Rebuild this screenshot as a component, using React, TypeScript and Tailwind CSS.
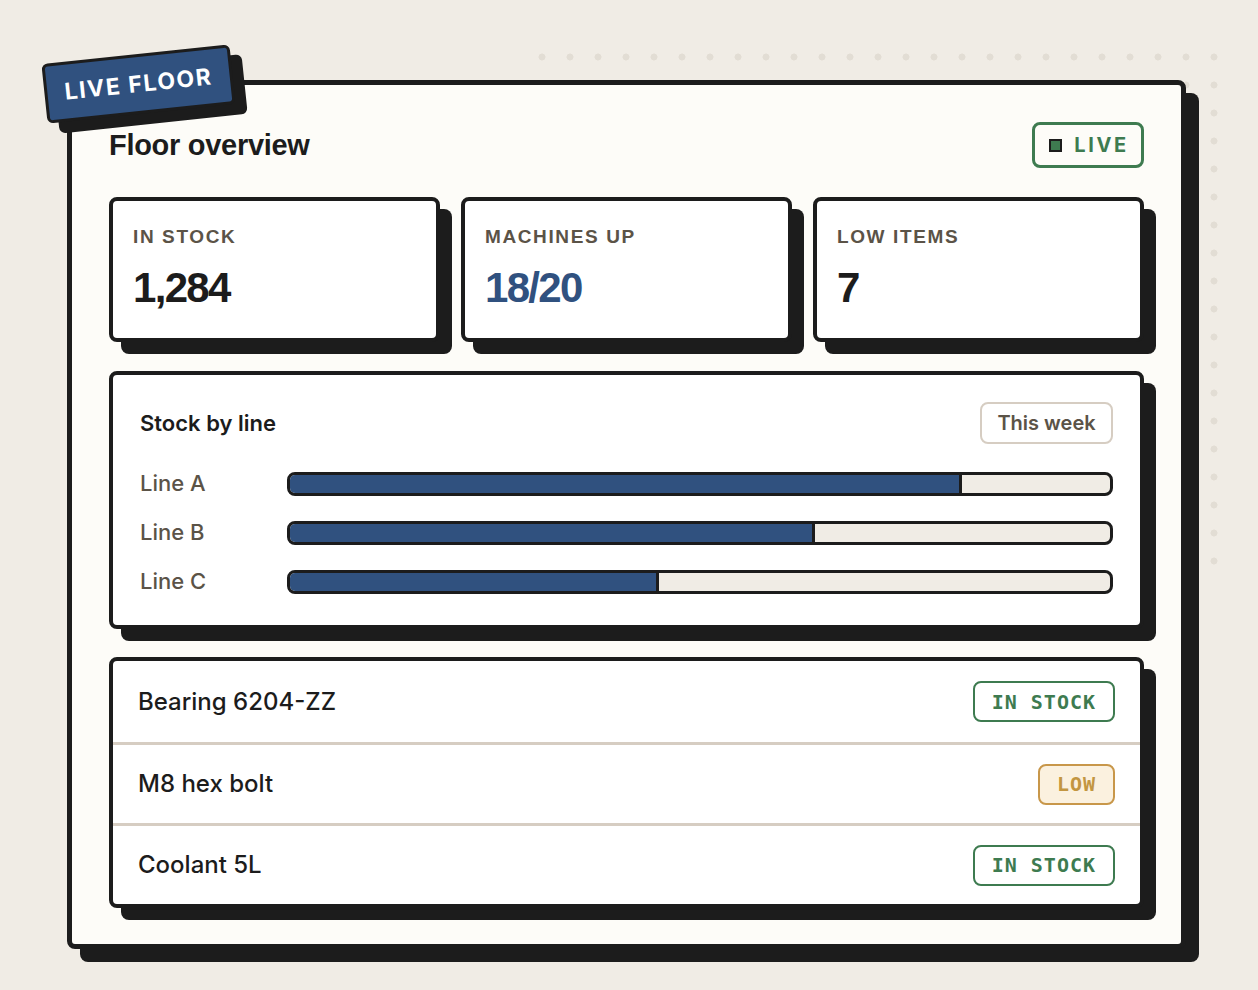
import React from 'react';

const stats = [
  { label: 'IN STOCK', value: '1,284', tone: 'text-[#1c1c1c]' },
  { label: 'MACHINES UP', value: '18/20', tone: 'text-[#30517f]' },
  { label: 'LOW ITEMS', value: '7', tone: 'text-[#1c1c1c]' },
];

const lines = [
  { name: 'Line A', pct: 82 },
  { name: 'Line B', pct: 64 },
  { name: 'Line C', pct: 45 },
];

const parts = [
  { name: 'Bearing 6204-ZZ', status: 'IN STOCK' },
  { name: 'M8 hex bolt', status: 'LOW' },
  { name: 'Coolant 5L', status: 'IN STOCK' },
];

const sans = "font-['Inter','Liberation_Sans',sans-serif]";
const arial = "font-['Liberation_Sans','Inter',sans-serif]";
const mono = "font-['DejaVu_Sans_Mono','Liberation_Mono',monospace]";

const StatusBadge: React.FC<{ status: string }> = ({ status }) => {
  const low = status === 'LOW';
  return (
    <span
      className={`${mono} h-[41px] px-[17px] flex items-center rounded-lg border-2 text-[20px] font-bold tracking-[1px] ${
        low
          ? 'border-[#c8974a] bg-[#fbf1df] text-[#c39641]'
          : 'border-[#3e7b50] bg-white text-[#3e7b50]'
      }`}
    >
      {status}
    </span>
  );
};

export default function App() {
  return (
    <div className={`${sans} relative min-h-[990px] bg-[#f0ece5] pl-[67px] pt-[80px] text-[#1c1c1c]`}>
      {/* dotted backdrop */}
      <div className="absolute left-[528px] top-[43px] w-[700px] h-[532px] bg-[radial-gradient(circle,#e2ddd4_3.2px,transparent_3.8px)] bg-[length:28px_28px]" />

      <div className="relative z-10 w-[1119px] rounded-lg border-[5px] border-[#1c1c1c] bg-[#fdfcf8] px-[37px] pt-[37px] pb-[36px] shadow-[13px_13px_0_#1c1c1c]">
        {/* tag */}
        <div className="absolute -left-[28px] -top-[31px] -rotate-[6deg] w-[189px] h-[60px] rounded-md border-[3px] border-[#1c1c1c] bg-[#30517f] shadow-[11px_11px_0_#1c1c1c] flex items-center justify-center">
          <span className="text-white text-[23px] font-bold tracking-[0.07em]">LIVE FLOOR</span>
        </div>

        <div className="flex items-center justify-between h-[46px]">
          <h1 className={`${arial} text-[29px] font-bold tracking-[-0.01em] pt-[1px]`}>Floor overview</h1>
          <div className="h-[46px] w-[112px] rounded-lg border-[3px] border-[#3e7b50] flex items-center justify-center gap-[12px] pl-[2px]">
            <span className="w-[13px] h-[13px] bg-[#3e7b50] border-2 border-[#1c1c1c]" />
            <span className="text-[#3e7b50] text-[20px] font-bold tracking-[0.13em]">LIVE</span>
          </div>
        </div>

        <div className="mt-[29px] grid grid-cols-3 gap-[21px]">
          {stats.map(s => (
            <div
              key={s.label}
              className="h-[145px] rounded-lg border-4 border-[#1c1c1c] bg-white shadow-[12px_12px_0_#1c1c1c] px-[20px] pt-[25px]"
            >
              <div className={`${arial} text-[19px] leading-[22px] font-bold tracking-[0.085em] text-[#5b5347]`}>{s.label}</div>
              <div className={`${arial} mt-[19px] text-[42px] leading-none font-bold tracking-[-0.04em] ${s.tone}`}>{s.value}</div>
            </div>
          ))}
        </div>

        <div className="mt-[29px] h-[258px] rounded-lg border-4 border-[#1c1c1c] bg-white shadow-[12px_12px_0_#1c1c1c] px-[27px] pt-[27px]">
          <div className="flex items-center justify-between h-[42px]">
            <h2 className="text-[22px] font-semibold">Stock by line</h2>
            <button className="h-[42px] w-[133px] rounded-lg border-2 border-[#d6cdc2] text-[20px] font-semibold text-[#5b5347]">
              This week
            </button>
          </div>
          <div className="mt-[23px] flex flex-col gap-[21px]">
            {lines.map(l => (
              <div key={l.name} className="grid grid-cols-[147px_1fr] items-center h-[28px]">
                <span className="text-[22px] font-medium text-[#5b5347]">{l.name}</span>
                <div className="h-[24px] rounded-lg border-[3px] border-[#1c1c1c] bg-[#f0ece5] overflow-hidden">
                  <div className="h-full bg-[#30517f] border-r-[3px] border-[#1c1c1c]" style={{ width: `${l.pct}%` }} />
                </div>
              </div>
            ))}
          </div>
        </div>

        <div className="mt-[28px] rounded-lg border-4 border-[#1c1c1c] bg-white shadow-[12px_12px_0_#1c1c1c] overflow-hidden">
          {parts.map((p, i) => (
            <div
              key={p.name}
              className={`h-[81px] px-[25px] flex items-center justify-between ${i > 0 ? 'border-t-[3px] border-[#d6cdc2]' : ''}`}
            >
              <span className="text-[24px] font-medium">{p.name}</span>
              <StatusBadge status={p.status} />
            </div>
          ))}
        </div>
      </div>
    </div>
  );
}
